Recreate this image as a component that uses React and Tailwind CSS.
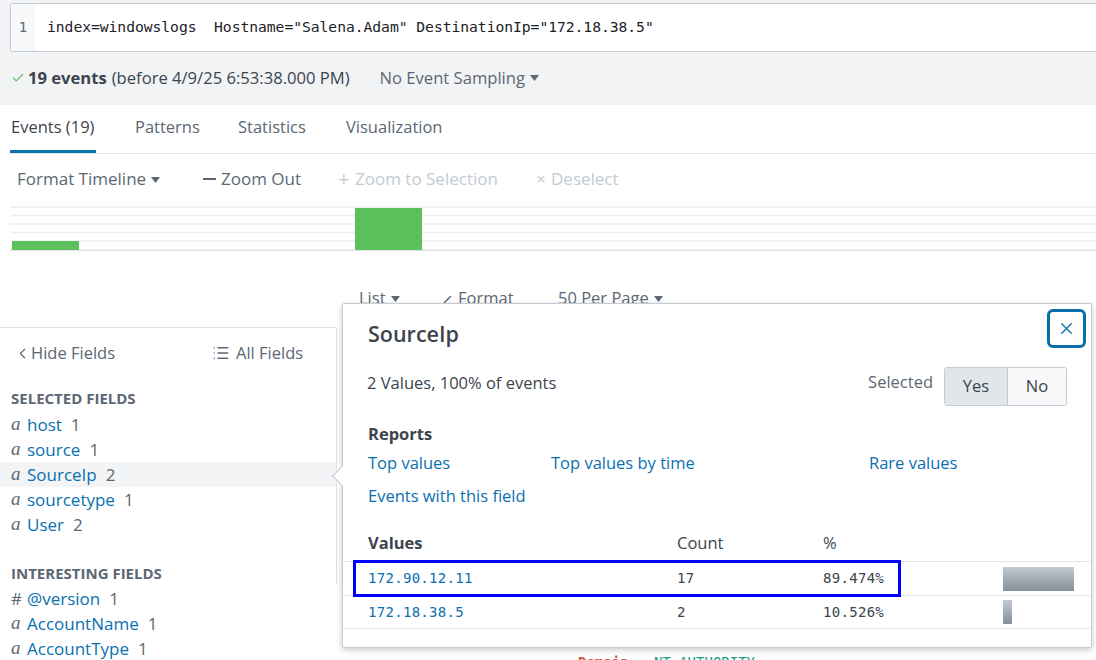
import { Check, ChevronLeft, List, X } from "lucide-react";

const Caret = () => (
  <svg width="9" height="6" viewBox="0 0 9 6" className="inline-block ml-[5px] mb-[2px]">
    <path d="M0 0h9L4.5 6z" fill="currentColor" />
  </svg>
);

const selectedFields = [
  { type: "a", name: "host", count: 1 },
  { type: "a", name: "source", count: 1 },
  { type: "a", name: "SourceIp", count: 2, active: true },
  { type: "a", name: "sourcetype", count: 1 },
  { type: "a", name: "User", count: 2 },
];

const interestingFields = [
  { type: "#", name: "@version", count: 1 },
  { type: "a", name: "AccountName", count: 1 },
  { type: "a", name: "AccountType", count: 1 },
];

const values = [
  { value: "172.90.12.11", count: 17, pct: "89.474%", bar: 71 },
  { value: "172.18.38.5", count: 2, pct: "10.526%", bar: 9 },
];

function FieldRow({ field }) {
  return (
    <div
      className={`h-[25px] flex items-center pl-[11px] text-[17px] ${
        field.active ? "bg-[#f2f4f5]" : ""
      }`}
    >
      {field.type === "a" ? (
        <span className="w-[16px] text-[#5c6773] italic font-['Liberation_Serif',serif] text-[19px]">a</span>
      ) : (
        <span className="w-[16px] text-[#5c6773] text-[17px]">#</span>
      )}
      <span className="text-[#0a70b0]">{field.name}</span>
      <span className="ml-[9px] text-[#5c6773]">{field.count}</span>
    </div>
  );
}

export default function App() {
  return (
    <div className="w-[1096px] h-[660px] overflow-hidden relative bg-white font-['Open_Sans',sans-serif] text-[#3c444d]">
      {/* Search header */}
      <div className="bg-[#f2f3f5] h-[105px] pt-[3px] pl-[10px]">
        <div className="flex h-[49px] bg-white border border-r-0 border-[#c3cbd4] rounded-l-[3px]">
          <div className="w-[24px] bg-[#f7f8fa] flex items-center justify-center text-[14px] text-[#5c6773] font-['DejaVu_Sans_Mono',monospace]">
            1
          </div>
          <div className="pl-[12px] flex items-center text-[14.7px] text-[#1d2227] font-['DejaVu_Sans_Mono',monospace] whitespace-pre tracking-[-0.05px]">
            {'index=windowslogs  Hostname="Salena.Adam" DestinationIp="172.18.38.5"'}
          </div>
        </div>
        <div className="mt-[14px] h-[24px] flex items-center text-[16.6px]">
          <Check className="w-[14px] h-[14px] text-[#5cc05c] ml-[1px]" strokeWidth={2} />
          <span className="ml-[3px] font-bold text-[#3c444d]">19 events</span>
          <span className="ml-[5px] text-[#3c444d]">(before 4/9/25 6:53:38.000 PM)</span>
          <span className="ml-[30px] text-[#5c6773]">
            No Event Sampling
            <Caret />
          </span>
        </div>
      </div>

      {/* Tabs */}
      <div className="h-[49px] border-b border-[#e1e6eb] ml-[10px] flex text-[16.5px]">
        <div className="w-[86px] flex flex-col">
          <div className="h-[45px] flex items-center pl-[1px] text-[#3c444d]">Events (19)</div>
          <div className="h-[3px] bg-[#0877a6]" />
        </div>
        <div className="ml-[39px] w-[103px] h-[45px] flex items-center text-[#5c6773]">Patterns</div>
        <div className="w-[108px] h-[45px] flex items-center text-[#5c6773]">Statistics</div>
        <div className="h-[45px] flex items-center text-[#5c6773]">Visualization</div>
      </div>

      {/* Timeline toolbar */}
      <div className="h-[52px] pb-[2px] flex items-center text-[17px]">
        <div className="ml-[17px] w-[186px] text-[#5c6773]">
          Format Timeline
          <Caret />
        </div>
        <div className="w-[135px] flex items-center text-[#5c6773]">
          <span className="w-[13px] h-[2px] bg-[#5c6773] mr-[5px]" />
          Zoom Out
        </div>
        <div className="w-[198px] flex items-center text-[#c3cbd4]">
          <span className="w-[17px] text-[20px] leading-none">+</span>
          Zoom to Selection
        </div>
        <div className="flex items-center text-[#c3cbd4]">
          <span className="w-[15px]">×</span>
          Deselect
        </div>
      </div>

      {/* Timeline chart */}
      <svg width="1086" height="45" className="block ml-[10px]">
        {[1, 9.5, 18, 26.5, 35].map((y) => (
          <rect key={y} x="0" y={y - 0.75} width="1086" height="1.5" fill="#ebedf0" />
        ))}
        <rect x="0" y="43.5" width="1086" height="1.5" fill="#dde1e6" />
        <rect x="2" y="35" width="67" height="9" fill="#5cc05c" />
        <rect x="345" y="2" width="67" height="42" fill="#5cc05c" />
      </svg>

      {/* Results toolbar */}
      <div className="h-[76px] pt-[36px] pl-[359px] flex text-[16.5px] text-[#5c6773] leading-[22px]">
        <div className="w-[82px]">
          List
          <Caret />
        </div>
        <div className="w-[117px]">
          <svg width="12" height="12" viewBox="0 0 12 12" className="inline-block mr-[5px]">
            <path d="M2 11 L3 8 L9.5 1.5 L10.5 2.5 L4 9 Z" fill="#5c6773" />
          </svg>
          Format
        </div>
        <div>
          50 Per Page
          <Caret />
        </div>
      </div>

      {/* Main area */}
      <div className="flex h-[257px]">
        <div className="w-[337px] shrink-0 border-t border-r border-[#dfe3e8]">
          <div className="mt-[14px] h-[22px] flex items-center text-[16.5px] text-[#5c6773]">
            <div className="w-[212px] flex items-center pl-[14px]">
              <ChevronLeft className="w-[17px] h-[17px]" strokeWidth={1.6} />
              <span>Hide Fields</span>
            </div>
            <div className="flex items-center">
              <List className="w-[18px] h-[18px] mr-[6px]" strokeWidth={1.8} />
              <span>All Fields</span>
            </div>
          </div>
          <div className="mt-[24px] h-[20px] flex items-center pl-[11px] text-[15px] font-bold text-[#5c6773]">
            SELECTED FIELDS
          </div>
          <div className="mt-[4px]">
            {selectedFields.map((f) => (
              <FieldRow key={f.name} field={f} />
            ))}
          </div>
          <div className="mt-[26px] h-[20px] flex items-center pl-[11px] text-[15px] font-bold text-[#5c6773]">
            INTERESTING FIELDS
          </div>
          <div className="mt-[3px]">
            {interestingFields.map((f) => (
              <FieldRow key={f.name} field={f} />
            ))}
          </div>
        </div>
        <div className="flex-1 pt-[325px] pl-[241px] text-[14px] font-['DejaVu_Sans_Mono',monospace] whitespace-pre">
          <span className="text-[#d6563c] font-bold">Domain</span>
          <span className="text-[#3c444d]"> = </span>
          <span className="text-[#1a9c87]">NT AUTHORITY</span>
        </div>
      </div>

      {/* Field popover */}
      <div className="absolute left-[342px] top-[303px] w-[750px] h-[345px] bg-white border border-[#c3cbd4] rounded-[2px] shadow-[0_2px_6px_rgba(0,0,0,0.22)]">
        <div className="absolute -left-[8px] top-[165px] w-[14px] h-[14px] rotate-45 bg-white border-l border-b border-[#c3cbd4]" />

        <button className="absolute left-[704px] top-[5px] w-[39px] h-[39px] border-[3px] border-[#0a6fa8] rounded-[6px] flex items-center justify-center">
          <X className="w-[19px] h-[19px] text-[#0a6fa8]" strokeWidth={1.7} />
        </button>

        <div className="pt-[17px] pl-[25px] h-[43px] text-[21.5px] font-semibold leading-[26px] text-[#3c444d]">
          SourceIp
        </div>

        <div className="mt-[20px] h-[39px] px-[24px] flex items-center text-[16.5px]">
          <span className="mb-[6px] text-[#3c444d]">2 Values, 100% of events</span>
          <span className="ml-auto mb-[8px] text-[#5c6773]">Selected</span>
          <div className="ml-[11px] flex h-[39px] border border-[#c3cbd4] rounded-[3px] overflow-hidden">
            <div className="w-[63px] bg-[#e1e6eb] border-r border-[#c3cbd4] flex items-center justify-center text-[#3c444d]">
              Yes
            </div>
            <div className="w-[58px] bg-[#f7f8fa] flex items-center justify-center text-[#3c444d]">
              No
            </div>
          </div>
        </div>

        <div className="mt-[17px] h-[22px] pl-[25px] text-[16.5px] font-bold leading-[22px] text-[#3c444d]">Reports</div>
        <div className="mt-[7px] h-[22px] pl-[25px] flex text-[16.5px] leading-[22px] text-[#0a70b0]">
          <span className="w-[183px]">Top values</span>
          <span className="w-[318px]">Top values by time</span>
          <span>Rare values</span>
        </div>
        <div className="mt-[11px] h-[22px] pl-[25px] text-[16.5px] leading-[22px] text-[#0a70b0]">Events with this field</div>

        <div className="mt-[19px] w-[748px]">
          <div className="h-[36px] flex items-center text-[16.5px] border-b border-[#e1e6eb]">
            <span className="pl-[25px] w-[334px] font-bold text-[#3c444d]">Values</span>
            <span className="w-[146px] text-[#3c444d]">Count</span>
            <span className="text-[#3c444d]">%</span>
          </div>
          {values.map((v, i) => (
            <div
              key={v.value}
              className={`${i === 0 ? "h-[34px]" : "h-[33px]"} flex items-center border-b border-[#e1e6eb] text-[14px] font-['DejaVu_Sans_Mono',monospace] tracking-[0.3px]`}
            >
              <span className="pl-[25px] w-[334px] text-[#0a70b0]">{v.value}</span>
              <span className="w-[146px] text-[#3c444d]">{v.count}</span>
              <span className="w-[180px] text-[#3c444d]">{v.pct}</span>
              <div
                className="h-[24px] bg-gradient-to-b from-[#c3cad2] to-[#87909b]"
                style={{ width: v.bar }}
              />
            </div>
          ))}
        </div>

        <div className="absolute left-[10px] top-[256px] w-[548px] h-[37px] border-[3px] border-[#0000ff]" />
      </div>
    </div>
  );
}
